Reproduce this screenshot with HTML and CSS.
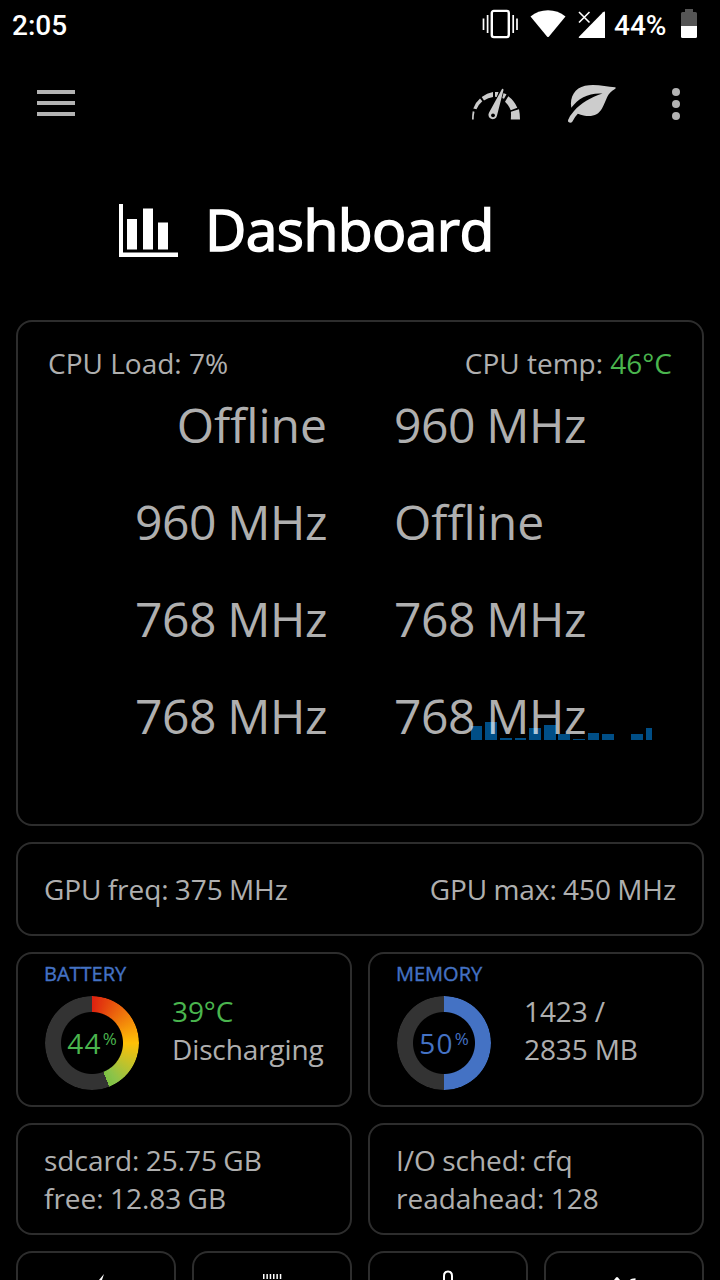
FILE: index.html
```html
<!DOCTYPE html>
<html lang="en">

<head>
  <meta charset="UTF-8">
  <title>Dashboard</title>
  <meta name="viewport" content="width=device-width, initial-scale=1.0">
  <link rel="stylesheet" href="styles.css">
</head>

<body>
  <div class="status">
    <span class="status__time">2:05</span>
    <div class="status__icons">
      <svg class="icon-vibrate" viewBox="0 0 36 30">
        <rect x="9.8" y="1.900" width="17" height="26.200" rx="2" fill="none" stroke="#fff" stroke-width="2.4"></rect>
        <path d="M1.500 9.500v11.500M5.600 6v18M31.200 6v18M35 9.500v11.500" fill="none" stroke="#fff" stroke-width="1.700"></path>
      </svg>
      <svg class="icon-wifi" viewBox="0 0 36 28">
        <path d="M.5 6.500Q8 .3 18 .3t17.500 6.200L19 26.600q-1 1-2 0z" fill="#fff"></path>
      </svg>
      <svg class="icon-signal" viewBox="0 0 28 28">
        <path d="M27 2.500v25.500H1.500q-1.500 0-.5-1.300L25 2.300q2-1.500 2 .2z" fill="#fff"></path>
        <path d="M.7 1.700l11 11M11.700 1.700l-11 11" stroke="#000" stroke-width="4"></path>
        <path d="M1 2l10.500 10.500M11.500 2L1 12.500" stroke="#fff" stroke-width="1.600"></path>
      </svg>
      <span class="status__level">44%</span>
      <svg class="icon-battery" viewBox="0 0 16 29">
        <path d="M4 0h8v3h2.500q1.500 0 1.500 1.500V17H0V4.500Q0 3 1.500 3H4z" fill="#555"></path>
        <path d="M0 17h16v10.500q0 1.500-1.500 1.500h-13Q0 29 0 27.500z" fill="#fff"></path>
      </svg>
    </div>
  </div>

  <header class="toolbar">
    <svg class="icon-menu" viewBox="0 0 38 26">
      <path d="M0 0h38v4H0zM0 11h38v4H0zM0 22h38v4H0z"></path>
    </svg>
    <div class="toolbar__actions">
      <svg class="icon-gauge" viewBox="0 0 49 36">
        <path d="M1 35.500q0-4.500.7-8.300l1.800.5q-.8 3.800-.8 7.800zM2.300 24.500Q4.300 18.500 9 14.500l2.300 2.800Q8 20 5.500 25.300zM10.700 13Q16 9 22 8v5q-5 .5-9 3.500zM24 8h3.500L26 13l-2-.2zM32 9l3.500 1.200-2.500 4.500-2.500-1zM37.300 12.200q6.200 4.600 9 11.500l-6.600 2.600q-2-5.300-5.700-8.600zM39.900 27.700L48 25.200q1 5 1 10.300H39.800q.3-4 .1-7.800z"></path>
        <path d="M31 4.900q1.400-.5 1.500 1L25.900 32a4.300 4.300 0 1 1-7.800-3.400z" stroke="#000" stroke-width="1.600" paint-order="stroke"></path>
        <circle cx="22" cy="31.300" r="1.900" fill="#000"></circle>
      </svg>
      <svg class="icon-leaf" viewBox="0 0 48 38">
        <path d="M3.300 22.700C1.500 12 7 3 17 .8 27-1.200 38 1.500 47 2.300q1.500.3.3 1.500C38 9 39.500 14 34 23.500 29.500 31.500 21 33 9.800 28.700Q6.500 32 4.300 36.800q-1.500 1.700-3.800.3-.8-1-.4-2.200Q1.500 31 6 26C13 18 22.500 12.500 34.500 8.500 21 7.500 10.500 13 3.300 22.700z"></path>
      </svg>
      <svg class="icon-more" viewBox="0 0 8 32">
        <circle cx="4" cy="4" r="4"></circle>
        <circle cx="4" cy="16" r="4"></circle>
        <circle cx="4" cy="28" r="4"></circle>
      </svg>
    </div>
  </header>

  <div class="title">
    <svg class="icon-chart" viewBox="0 0 59 54">
      <path d="M0 0h4v48.500h55v4.500H0zM8 15h10v30.500H8zM24 4.500h10v41H24zM39 18.500h10v27H39z"></path>
    </svg>
    <h1>Dashboard</h1>
  </div>

  <main class="cards">
    <section class="card cpu">
      <div class="cpu__head">
        <span>CPU Load: 7%</span>
        <span>CPU temp: <span class="good">46°C</span></span>
      </div>
      <div class="cpu__cores">
        <span class="off">Offline</span>
        <span>960 MHz</span>
        <span>960 MHz</span>
        <span class="off">Offline</span>
        <span>768 MHz</span>
        <span>768 MHz</span>
        <span>768 MHz</span>
        <span>768 MHz</span>
      </div>
      <!-- load history, drawn behind the core labels -->
      <svg class="cpu__history" viewBox="0 0 182 18">
        <path d="M0 4h11v14H0zM14 0h12v18H14zM29 16h12v2H29zM44 16h11v2H44zM58 6h12v12H58zM73 3h12v15H73zM87 12h12v6H87zM102 17h12v1h-12zM117 11h11v7h-11zM131 12h12v6h-12zM160 12h12v6h-12zM175 6h6v12h-6z"></path>
      </svg>
    </section>

    <section class="card gpu">
      <span>GPU freq: 375 MHz</span>
      <span>GPU max: 450 MHz</span>
    </section>

    <section class="card gauge-card">
      <h2>BATTERY</h2>
      <div class="gauge-card__body">
        <div class="ring ring--battery"><span class="ring__value good">44<sup>%</sup></span></div>
        <p><span class="good">39°C</span><br>Discharging</p>
      </div>
    </section>

    <section class="card gauge-card">
      <h2>MEMORY</h2>
      <div class="gauge-card__body">
        <div class="ring ring--memory"><span class="ring__value">50<sup>%</sup></span></div>
        <p>1423 /<br>2835 MB</p>
      </div>
    </section>

    <section class="card info">
      <p>sdcard: 25.75 GB<br>free: 12.83 GB</p>
    </section>

    <section class="card info">
      <p>I/O sched: cfq<br>readahead: 128</p>
    </section>

    <a class="card tile">
      <svg viewBox="0 0 60 7"><path d="M38 1l-5 6h3z"></path></svg>
    </a>
    <a class="card tile">
      <svg viewBox="0 0 60 7"><path d="M21 1h1.500v5H21zM24.400 1h1.500v5h-1.500zM27.700 1h1.500v5h-1.500zM31 1h1.500v5H31zM34.400 1h1.500v5h-1.500zM37.800 1h1.500v5h-1.500z"></path></svg>
    </a>
    <a class="card tile">
      <svg viewBox="0 0 60 7"><path d="M26 7V3q0-4.500 4-4.500t4 4.500v4" fill="none" stroke="#fff" stroke-width="2"></path></svg>
    </a>
    <a class="card tile">
      <svg viewBox="0 0 60 7"><path d="M20 7l2-2.500q1-.8 2 0L26 7zM36 7q1-1.800 5.500-1.800V7z"></path></svg>
    </a>
  </main>
</body>

</html>
```

FILE: styles.css
```css
:root {
  --bg: #000;
  --text: rgba(255, 255, 255, 0.7);
  --border: #2d2d2d;
  --accent: #4472c4;
  --good: #4ab54e;
  --ring: #333;
}

* {
  box-sizing: border-box;
}

body {
  background: var(--bg);
  color: var(--text);
  font-family: "Open Sans", "Noto Sans", sans-serif;
  font-size: 28px;
  line-height: 38px;
  margin: 0;
}

svg {
  display: block;
  fill: #ccc;
  overflow: visible;
}

h1,
h2,
p {
  margin: 0;
}

.good {
  color: var(--good);
}

/* status bar */
.status {
  display: flex;
  justify-content: space-between;
  height: 48px;
  padding: 0 23px 0 12px;
  color: #fff;
  font: 500 28px/52px Roboto, sans-serif;
}

.status__icons {
  display: flex;
  align-items: flex-start;
}

.icon-vibrate {
  width: 36px;
  height: 30px;
  margin: 9px 12px 0 0;
}

.icon-wifi {
  width: 36px;
  height: 28px;
  margin: 10px 12px 0 0;
}

.icon-signal {
  width: 28px;
  height: 28px;
  margin: 10px 8px 0 0;
}

.status__level {
  width: 52px;
  margin-right: 15px;
}

.icon-battery {
  width: 16px;
  height: 29px;
  margin-top: 9px;
}

/* toolbar */
.toolbar {
  display: flex;
  align-items: center;
  justify-content: space-between;
  height: 112px;
  padding: 0 40px 2px 37px;
}

.toolbar__actions {
  display: flex;
  align-items: center;
  margin-top: 2px;
}

.icon-menu {
  width: 38px;
  height: 26px;
  fill: #b3b3b3;
}

.icon-gauge {
  width: 49px;
  height: 36px;
  margin: 0 48px 4px 0;
}

.icon-leaf {
  width: 48px;
  height: 38px;
  margin-right: 56px;
}

.icon-more {
  width: 8px;
  height: 32px;
  fill: #b3b3b3;
}

.title {
  display: flex;
  align-items: center;
  height: 160px;
  padding: 0 0 18px 119px;
  color: #fff;
}

.title h1 {
  margin: -5px 0 0 27px;
  font-size: 57px;
  font-weight: 400;
  letter-spacing: -0.6px;
  -webkit-text-stroke: 1.5px;
}

.icon-chart {
  width: 59px;
  height: 54px;
  fill: #fff;
}

/* cards */
.cards {
  display: grid;
  grid-template-columns: repeat(4, 160px);
  gap: 16px;
  padding: 0 16px;
}

.card {
  grid-column: span 2;
  border: 2px solid var(--border);
  border-radius: 16px;
}

.cpu {
  position: relative;
  z-index: 0;
  grid-column: span 4;
  height: 506px;
  padding: 22px 30px;
}

.cpu__head {
  display: flex;
  justify-content: space-between;
}

.cpu__cores {
  display: grid;
  grid-template-columns: 279px 1fr;
  grid-template-rows: repeat(4, 97px);
  column-gap: 67px;
  height: 388px;
  font-size: 48px;
  line-height: 86px;
  letter-spacing: -0.4px;
  word-spacing: -1px;
}

.cpu__cores .off {
  letter-spacing: 0;
}

.cpu__cores span:nth-child(odd) {
  text-align: right;
}

.cpu__history {
  position: absolute;
  z-index: -1;
  right: 49px;
  bottom: 84px;
  width: 182px;
  height: 18px;
  fill: #004e86;
}

.gpu {
  grid-column: span 4;
  display: flex;
  align-items: center;
  justify-content: space-between;
  height: 94px;
  padding: 0 26px;
  letter-spacing: -0.04px;
  word-spacing: -1px;
}

.gauge-card {
  height: 155px;
  padding: 6px 26px 0;
}

.gauge-card h2 {
  color: var(--accent);
  font-size: 20px;
  font-weight: 400;
  line-height: 28px;
  -webkit-text-stroke: 0.4px;
}

.gauge-card__body {
  display: flex;
  gap: 32px;
  margin-top: 7px;
}

.gauge-card__body p {
  margin-top: -3px;
  letter-spacing: -0.12px;
  white-space: nowrap;
}

.ring {
  position: relative;
  display: flex;
  flex-shrink: 0;
  align-items: center;
  justify-content: center;
  width: 96px;
  height: 96px;
}

.ring::before {
  content: "";
  position: absolute;
  inset: 1px;
  border-radius: 50%;
  -webkit-mask: radial-gradient(circle, transparent 30.5px, #000 31.5px);
  mask: radial-gradient(circle, transparent 30.5px, #000 31.5px);
}

.ring--battery::before {
  background: conic-gradient(#dd2010, #ffc107 25%, #8bc34a 41%, #7cc142 44%, var(--ring) 44%);
}

.ring--memory {
  color: var(--accent);
}

.ring--memory::before {
  background: conic-gradient(var(--accent) 50%, var(--ring) 50%);
}

.ring__value {
  letter-spacing: 1.2px;
}

.ring__value sup {
  margin-left: 1px;
  font-size: 17px;
  line-height: 0;
  letter-spacing: 0;
  vertical-align: 9px;
}

.info {
  height: 112px;
  padding: 16px 26px;
  word-spacing: -1px;
}

/* only the top edge of this row is on screen */
.tile {
  grid-column: span 1;
  height: 29px;
  padding: 20px 48px 0;
  border-bottom: 0;
  border-radius: 16px 16px 0 0;
}

.tile svg {
  width: 60px;
  height: 7px;
  fill: #fff;
}
```
